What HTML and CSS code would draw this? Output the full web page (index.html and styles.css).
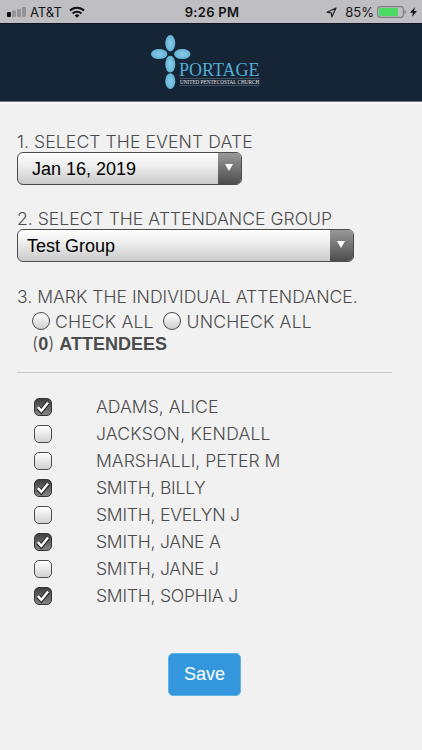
FILE: index.html
```html
<!DOCTYPE html>
<html lang="en">
<head>
    <meta charset="UTF-8">
    <meta name="viewport" content="width=device-width, initial-scale=1.0">
    <title>Portage Attendance</title>
    <link rel="stylesheet" href="styles.css">
</head>
<body>

    <div class="status-bar">
        <div class="carrier">
            <svg width="19" height="10" viewBox="0 0 19 10">
                <rect x="0" y="5" width="4" height="5" rx="1" fill="#111"/>
                <rect x="5" y="3.5" width="4" height="6.5" rx="1" fill="#929297"/>
                <rect x="10" y="2" width="4" height="8" rx="1" fill="#929297"/>
                <rect x="15" y="0" width="4" height="10" rx="1" fill="#929297"/>
            </svg>
            <span class="carrier-name">AT&amp;T</span>
            <svg width="16" height="12" viewBox="0 0 16 12" fill="none" stroke="#111" stroke-width="2.1">
                <path d="M1 4.6a10 10 0 0 1 14 0"/>
                <path d="M3.6 7.5a6.3 6.3 0 0 1 8.8 0"/>
                <path d="M8 11.8 5.7 9.4a3.3 3.3 0 0 1 4.6 0z" fill="#111" stroke="none"/>
            </svg>
        </div>
        <span class="clock">9:26 PM</span>
        <div class="battery">
            <svg width="11" height="11" viewBox="0 0 11 11" fill="none" stroke="#222" stroke-width="1.2" stroke-linejoin="round">
                <path d="M10 1 1 5.2l4.3.6.5 4.2z"/>
            </svg>
            <span class="percent">85%</span>
            <svg width="29" height="12" viewBox="0 0 29 12">
                <rect x=".6" y=".6" width="25.8" height="10.8" rx="2.8" fill="none" stroke="#7b7b80" stroke-width="1.1"/>
                <rect x="2" y="2" width="19" height="8" rx="1" fill="#4bd964"/>
                <path d="M27.6 4c1.6.7 1.6 3.3 0 4z" fill="#6c6c70"/>
            </svg>
            <svg width="7" height="10" viewBox="0 0 7 10">
                <path d="M5 0 0 5.7h3L2 10l5-5.9H4z" fill="#111"/>
            </svg>
        </div>
    </div>

    <header class="banner">
        <svg class="logo" width="160" height="62" viewBox="0 0 160 62">
            <defs>
                <radialGradient id="petal">
                    <stop offset="0" stop-color="#8bcce6"/>
                    <stop offset="1" stop-color="#62b3d7"/>
                </radialGradient>
            </defs>
            <g fill="url(#petal)">
                <ellipse cx="20.3" cy="9.2" rx="5" ry="8.2"/>
                <ellipse cx="9.2" cy="20.1" rx="8.2" ry="5"/>
                <ellipse cx="32.3" cy="20.1" rx="8.2" ry="5"/>
                <ellipse cx="20.3" cy="30.2" rx="5" ry="8.4"/>
                <ellipse cx="20.3" cy="47.2" rx="5" ry="7.9"/>
            </g>
            <text x="29" y="41.8" class="logo-name" textLength="80.5" lengthAdjust="spacingAndGlyphs">PORTAGE</text>
            <path d="M29.5 44.5h80M29.5 51.5h80" stroke="#536474" stroke-width=".7"/>
            <text x="30" y="50.2" class="logo-sub">UNITED PENTECOSTAL CHURCH</text>
        </svg>
    </header>

    <main class="content">
        <div class="label step-date">1. SELECT THE EVENT DATE</div>
        <div class="select select-date">
            <span class="value">Jan 16, 2019</span>
            <span class="arrow"></span>
        </div>

        <div class="label step-group">2. SELECT THE ATTENDANCE GROUP</div>
        <div class="select select-group">
            <span class="value">Test Group</span>
            <span class="arrow"></span>
        </div>

        <div class="label step-mark">3. MARK THE INDIVIDUAL ATTENDANCE.</div>
        <div class="mark-all">
            <span class="radio"></span><span class="check-all">CHECK ALL</span>
            <span class="radio"></span><span class="uncheck-all">UNCHECK ALL</span>
        </div>
        <div class="count">(<b>0</b>) <b>ATTENDEES</b></div>

        <hr>

        <svg class="symbols" width="0" height="0">
            <symbol id="tick" viewBox="0 0 18 18">
                <path d="M4 9.6 7.3 13.2 14 4.6" fill="none" stroke="#222" stroke-width="4.4"/>
                <path d="M3.9 9.1 7.3 12.9 14 4.4" fill="none" stroke="#fff" stroke-width="2.5"/>
            </symbol>
        </svg>

        <ul class="people">
            <li><span class="box checked"><svg><use href="#tick"/></svg></span><span>ADAMS, ALICE</span></li>
            <li><span class="box"></span><span class="wide">JACKSON, KENDALL</span></li>
            <li><span class="box"></span><span>MARSHALLI, PETER M</span></li>
            <li><span class="box checked"><svg><use href="#tick"/></svg></span><span class="tight">SMITH, BILLY</span></li>
            <li><span class="box"></span><span class="tight">SMITH, EVELYN J</span></li>
            <li><span class="box checked"><svg><use href="#tick"/></svg></span><span class="tight">SMITH, JANE A</span></li>
            <li><span class="box"></span><span class="tight">SMITH, JANE J</span></li>
            <li><span class="box checked"><svg><use href="#tick"/></svg></span><span class="tight">SMITH, SOPHIA J</span></li>
        </ul>

        <button class="save">Save</button>
    </main>

</body>
</html>
```
FILE: styles.css
```css
* {
    box-sizing: border-box;
}

body {
    margin: 0;
    height: 750px;
    overflow: hidden;
    background-color: #f1f1f1;
    color: #4c4c4c;
    font-family: Inter, "Liberation Sans", sans-serif;
    font-size: 17.6px;
    font-weight: 300;
    white-space: nowrap;
}

svg {
    display: block;
}

/* Phone status bar */
.status-bar {
    display: grid;
    grid-template-columns: 1fr auto 1fr;
    align-items: center;
    height: 23px;
    padding: 1px 5px 0 7px;
    background-color: #bfbec3;
    color: #151515;
    font-family: Inter, sans-serif;
    font-size: 13px;
    font-weight: 400;
}

.carrier,
.battery {
    display: flex;
    align-items: center;
}

.carrier-name {
    margin: 0 7px 0 4px;
}

.battery {
    justify-content: flex-end;
}

.percent {
    margin: 0 3px 0 8px;
}

.battery svg:last-child {
    margin-left: 4px;
}

.clock {
    font-weight: 600;
    letter-spacing: 0.3px;
}

/* Church banner */
.banner {
    height: 79px;
    padding: 10px 0 0 150px;
    background-color: #162536;
    border-top: 1px solid #10151f;
    border-bottom: 1px solid #6d747e;
}

.logo-name {
    font-family: "Liberation Serif", serif;
    font-size: 18px;
    font-weight: 400;
    fill: #55acd2;
}

.logo-sub {
    font-family: "Liberation Serif", serif;
    font-size: 5.2px;
    font-weight: 400;
    fill: #e4e8eb;
}

/* Form */
.content {
    padding: 27px 29px 0 17px;
    border-top: 2px solid #f8f8f8;
}

.label {
    height: 21px;
    line-height: 22px;
}

.step-date {
    letter-spacing: 0.08px;
}

.select {
    display: flex;
    height: 33px;
    border: 1px solid #4c4c4c;
    border-radius: 6px;
    overflow: hidden;
    background: linear-gradient(#fff, #eee 40%, #cacaca);
    color: #000;
    font-family: "Liberation Sans", sans-serif;
    font-size: 18px;
    font-weight: 400;
    line-height: 32px;
}

.select-date {
    width: 225px;
    margin-bottom: 23px;
}

.select-group {
    width: 337px;
    margin-bottom: 24px;
}

.value {
    flex: 1;
    padding-left: 9px;
}

.select-date .value {
    padding-left: 14px;
}

.arrow {
    display: flex;
    justify-content: center;
    width: 23px;
    padding: 11px 1px 0 0;
    background: linear-gradient(#999, #4d4d4d);
}

.arrow::before {
    content: "";
    height: 0;
    border: 4px solid transparent;
    border-top: 7px solid #fff;
    border-bottom: 0;
}

.mark-all {
    display: flex;
    align-items: center;
    height: 25px;
    margin-left: 15px;
    padding-top: 3px;
    letter-spacing: 0.16px;
}

.radio {
    width: 18px;
    height: 18px;
    border: 1px solid #4c4c4c;
    border-radius: 50%;
    background: linear-gradient(#fff, #cfcfcf);
}

.check-all {
    margin: 0 9px 0 5px;
}

.uncheck-all {
    margin-left: 6px;
}

.count {
    height: 22px;
    line-height: 24px;
    margin-left: 15px;
}

.count b {
    font-family: "Liberation Sans", sans-serif;
    font-weight: 700;
    font-size: 18px;
}

hr {
    width: 375px;
    margin: 18px 0 20px;
    border: 0;
    border-top: 1px solid #c8c8c8;
}

.symbols {
    position: absolute;
}

.people {
    list-style: none;
    margin: 0 0 44px;
    padding: 0 0 0 17px;
}

.people li {
    display: flex;
    align-items: center;
    height: 27px;
    gap: 44px;
}

.wide {
    letter-spacing: 0.18px;
}

.tight {
    letter-spacing: -0.25px;
}

.box {
    width: 18px;
    height: 18px;
    border: 1px solid #4c4c4c;
    border-radius: 5px;
    background: linear-gradient(#fff, #d2d2d2);
}

.box.checked {
    border-color: #333;
    background: linear-gradient(#404040, #858585);
}

.box svg {
    width: 18px;
    height: 18px;
    margin: -1px;
}

.save {
    display: block;
    width: 73px;
    height: 43px;
    margin-left: 151px;
    padding: 0;
    border: 1px solid #58b4e3;
    border-radius: 5px;
    background-color: #3496dc;
    color: #fff;
    font-family: "Liberation Sans", sans-serif;
    font-size: 18px;
}
```
